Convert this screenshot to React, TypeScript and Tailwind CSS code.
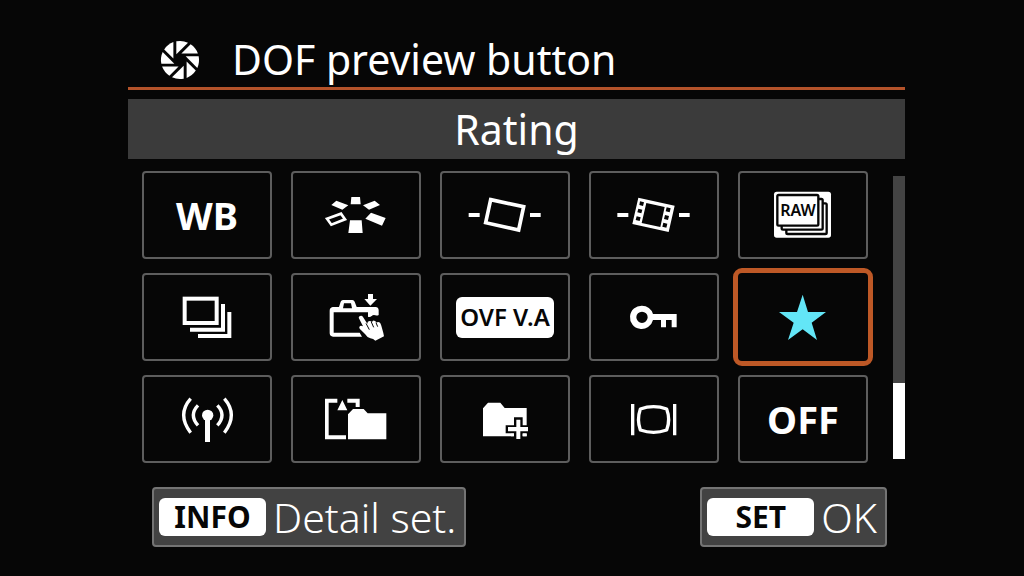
import type { ReactNode } from 'react';

function Glyph({ viewBox, children }: { viewBox: string; children: ReactNode }) {
  return (
    <svg viewBox={viewBox} className="block h-full w-full" fill="#fff" aria-hidden="true">
      {children}
    </svg>
  );
}

function ApertureIcon() {
  return (
    <svg viewBox="-60 -60 120 120" className="size-10 shrink-0" fill="#fff" aria-hidden="true">
      {[0, 45, 90, 135, 180, 225, 270, 315].map((angle) => (
        <path key={angle} d="M-11 -17V-56A57 57 0 0 1 24 -52Z" transform={`rotate(${angle})`} />
      ))}
    </svg>
  );
}

const pictureStyle = (
  <Glyph viewBox="490 24 378 252">
    <path d="M665 96h26l2 22h-30zM620 107l36 14-18 13-33-14zM735 107l16 13-33 14-18-13zM724 143l44 16-11 23-50-21zM661 166h35l3 38h-43z" />
    <path d="M592 161l42-15 12 17-41 16z" fill="none" stroke="#fff" strokeWidth="8" />
  </Glyph>
);

const levelStill = (
  <Glyph viewBox="37 24 378 252">
    <path d="M117 144h33v12h-33zM301 144h32v12h-32z" />
    <path d="M183 104l99 21-15 70-99-22z" fill="none" stroke="#fff" strokeWidth="11" />
  </Glyph>
);

const levelMovie = (
  <Glyph viewBox="484 24 378 252">
    <path d="M563 144h33v12h-33zM748 144h32v12h-32z" />
    <path
      fillRule="evenodd"
      d="M626 98l109 24-18 79-109-24zM650 114l-14 60 56 12 13-60zM631 109l-2 11 11 3 3-11zM626 131l-3 11 12 3 3-11zM621 154l-3 11 12 3 3-11zM711 127l-3 12 12 3 3-12zM706 150l-3 12 12 3 3-12zM701 173l-3 12 12 3 3-12z"
    />
  </Glyph>
);

const rawStack = (
  <Glyph viewBox="44 25 378 252">
    <rect x="146" y="81" width="171" height="138" rx="8" />
    <g fill="#fff" stroke="#060606" strokeWidth="7" strokeLinejoin="round">
      <rect x="183" y="116" width="121" height="92" rx="4" />
      <rect x="169" y="103" width="123" height="92" rx="4" />
      <rect x="156" y="91" width="123" height="92" rx="4" />
    </g>
    <text
      x="218"
      y="155"
      textAnchor="middle"
      fill="#060606"
      className="font-['Noto_Sans',sans-serif] text-[48px] font-semibold"
    >
      RAW
    </text>
  </Glyph>
);

const driveMode = (
  <Glyph viewBox="42 30 378 252">
    <rect x="164" y="101" width="96" height="73" fill="none" stroke="#fff" strokeWidth="12" />
    <path d="M273 117h12v83H180v-12h93zM292 141h12v78H204v-12h88z" />
  </Glyph>
);

const touchShutter = (
  <Glyph viewBox="490 30 378 252">
    <path
      fillRule="evenodd"
      d="M609 126h19l5-16q2-5 7-5h28q5 0 7 5l6 16h57q8 0 9 9v15q-4 3-10 1-6-3-11 2-5 4-11 2v-13H612v61h78l7 12h-87q-9 0-10-10v-68q0-9 9-11zM643 115l-3 15h27l-3-15z"
    />
    <path d="M715 87h15v15h12l-20 20-18-20h11z" />
    <path d="M687 158q1-6 7-6 4 0 6 4l13 20q0-8 6-8 5 0 8 4 1-6 7-5 5 1 7 6 3-4 8-1 4 3 6 10l6 22 2 10-26 13q-6-6-15-7-10-3-16-13l-16-16q-3-5 1-8 4-2 9 1z" />
    <path d="M709 175l10 19M725 171l7 16M739 173l5 12" stroke="#060606" strokeWidth="3" />
  </Glyph>
);

const keyLock = (
  <Glyph viewBox="484 30 378 252">
    <path
      fillRule="evenodd"
      d="M637 122a35 35 0 0 1 33 25h71v40h-15v-22h-17v22h-15v-22h-24a35 35 0 1 1-33-43zM637 140a17 17 0 1 0 0 34a17 17 0 1 0 0-34z"
    />
  </Glyph>
);

const ratingStar = (
  <Glyph viewBox="45 30 378 252">
    <path d="M233 89l16 52h54l-43 32 16 52-43-32-44 32 17-52-44-32h54z" fill="#63e6f7" />
  </Glyph>
);

const wireless = (
  <Glyph viewBox="42 21 378 252">
    <circle cx="233" cy="136" r="17" />
    <path d="M225 145h15v71h-15z" />
    <path
      d="M204 106q-28 29 0 60M262 106q28 29 0 60M182 86q-42 48 0 102M283 86q42 48 0 102"
      fill="none"
      stroke="#fff"
      strokeWidth="10"
    />
  </Glyph>
);

const cardFolder = (
  <Glyph viewBox="489 21 378 252">
    <path d="M585 86h37v12h-26v98h52v12h-63zM652 86h37v25h-12V98h-25zM637 90l15 31h-30z" />
    <path d="M654 133l15-16h32l12 13h56v78H654z" />
  </Glyph>
);

const createFolder = (
  <Glyph viewBox="37 21 378 252">
    <path d="M160 115l15-17h37l13 16h66v85H160z" />
    <path d="M253 142h26v24h20v24h-20v23h-26v-23h-25v-24h25z" fill="#060606" />
    <path d="M260 149h12v22h23v13h-23v23h-12v-23h-25v-13h25zM244 191h8v8h-8zM279 191h12v8h-12z" />
  </Glyph>
);

const displayScreen = (
  <Glyph viewBox="484 21 378 252">
    <path d="M604 102h10v94h-10zM730 102h10v94h-10z" />
    <path
      d="M632 117q40-14 79 0 12 32 0 63-39 14-79 0-11-31 0-63z"
      fill="none"
      stroke="#fff"
      strokeWidth="10"
      strokeLinejoin="round"
    />
  </Glyph>
);

const options: { label: string; art: ReactNode; selected?: boolean }[] = [
  { label: 'White balance', art: <span className="text-[38px] font-bold">WB</span> },
  { label: 'Picture style', art: pictureStyle },
  { label: 'Still level', art: levelStill },
  { label: 'Movie level', art: levelMovie },
  { label: 'Image quality', art: rawStack },
  { label: 'Drive mode', art: driveMode },
  { label: 'Touch shutter', art: touchShutter },
  {
    label: 'OVF simulation view assist',
    art: (
      <span className="flex h-[41px] w-[98px] items-center justify-center rounded-md bg-white text-2xl leading-none font-semibold whitespace-nowrap text-[#060606]">
        OVF V.A
      </span>
    ),
  },
  { label: 'Lock', art: keyLock },
  { label: 'Rating', art: ratingStar, selected: true },
  { label: 'Wireless', art: wireless },
  { label: 'Switch card and folder', art: cardFolder },
  { label: 'Create folder', art: createFolder },
  { label: 'Display', art: displayScreen },
  { label: 'Off', art: <span className="text-[38px] font-bold">OFF</span> },
];

function ActionButton({ badge, text }: { badge: string; text: string }) {
  return (
    <button
      type="button"
      className="flex h-15 items-center gap-[7px] rounded-sm border-2 border-[#747474] bg-[#424242] pr-2 pl-[5px] whitespace-nowrap"
    >
      <span className="flex h-[38px] w-[107px] items-center justify-center rounded-md bg-white text-[30px] leading-none font-bold text-[#060606]">
        {badge}
      </span>
      <span className="text-[41px] leading-none font-light">{text}</span>
    </button>
  );
}

export default function App() {
  return (
    <div className="min-h-screen bg-[#060606] pt-8 pr-[119px] pl-32 font-['Noto_Sans',sans-serif] text-white">
      <header className="flex h-[58px] items-center gap-8 border-b-3 border-[#b4532a] pl-8">
        <ApertureIcon />
        <h1 className="text-[41px] leading-none whitespace-nowrap">DOF preview button</h1>
      </header>

      <h2 className="mt-[9px] flex h-15 items-center justify-center bg-[#3b3b3b] text-[41px] leading-none">
        Rating
      </h2>

      <main className="mt-3 flex pl-[14px]">
        <div className="grid flex-1 grid-cols-5 gap-x-[19px] gap-y-[14px]">
          {options.map(({ label, art, selected }) => (
            <button
              key={label}
              type="button"
              aria-label={label}
              aria-pressed={Boolean(selected)}
              className={`flex h-[88px] min-w-0 items-center justify-center rounded border-2 leading-none ${
                selected ? 'border-transparent outline-5 outline-[#bd5826]' : 'border-[#5d5d5d]'
              }`}
            >
              {art}
            </button>
          ))}
        </div>
        <div className="mt-[5px] mb-1 ml-[25px] flex w-3 flex-col justify-end bg-[#434343]">
          <div className="h-[27%] bg-white" />
        </div>
      </main>

      <footer className="mt-6 flex justify-between pr-[18px] pl-6">
        <ActionButton badge="INFO" text="Detail set." />
        <ActionButton badge="SET" text="OK" />
      </footer>
    </div>
  );
}
